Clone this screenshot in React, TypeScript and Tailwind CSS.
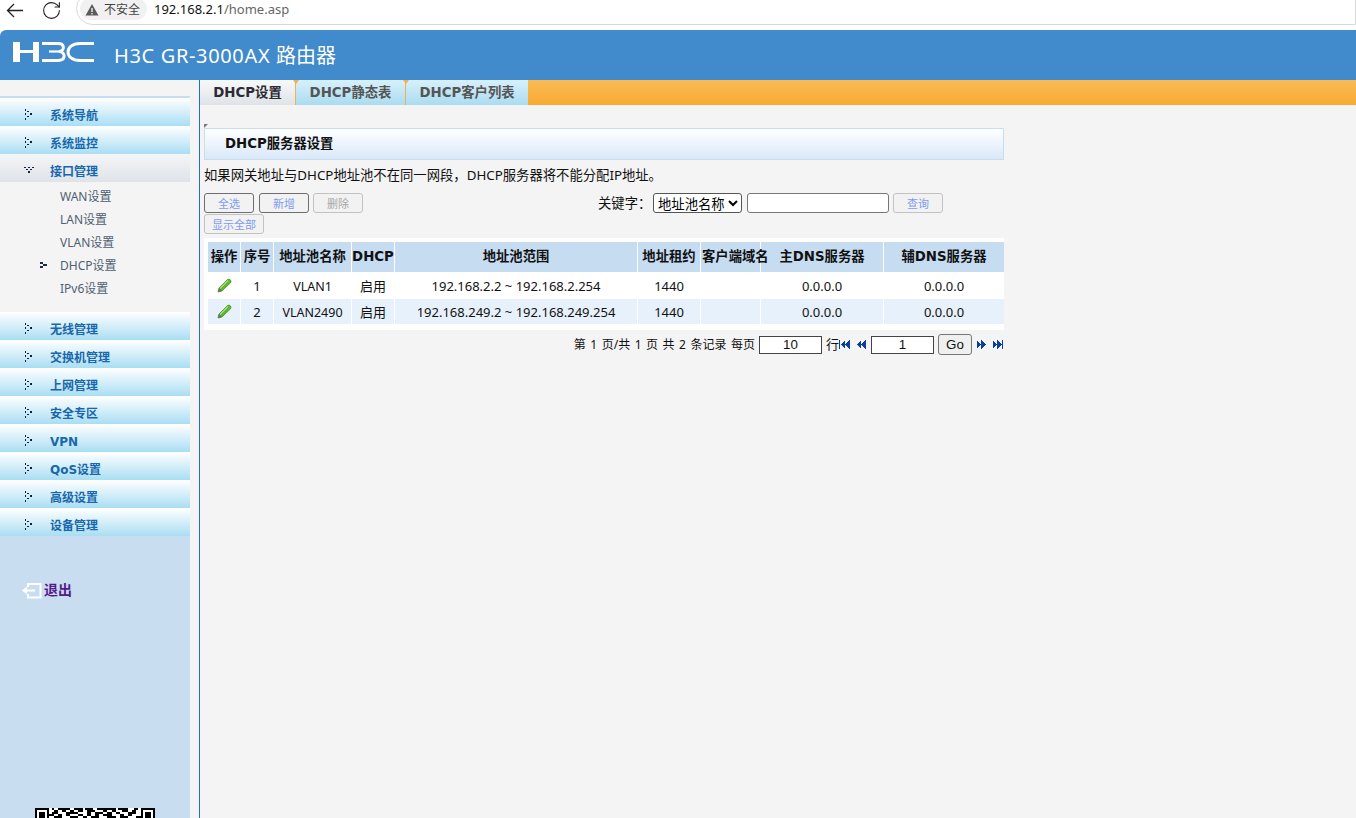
import React from "react";
import { RotateCw } from "lucide-react";

const F = "[font-family:'DejaVu_Sans','Noto_Sans_CJK_SC',sans-serif]";
const N = "[font-family:'Noto_Sans','Noto_Sans_CJK_SC',sans-serif]";

function Dotted({ open = false }: { open?: boolean }) {
  const c = "#0f2340";
  return open ? (
    <svg width="11" height="8" viewBox="0 0 11 8" shapeRendering="crispEdges">
      <rect x="0" y="1" width="2" height="1" fill={c} /><rect x="4" y="1" width="2" height="1" fill={c} /><rect x="8" y="1" width="2" height="1" fill={c} />
      <rect x="2" y="3" width="2" height="1" fill={c} /><rect x="6" y="3" width="2" height="1" fill={c} />
      <rect x="4" y="5" width="2" height="2" fill={c} />
    </svg>
  ) : (
    <svg width="9" height="11" viewBox="0 0 9 11" shapeRendering="crispEdges">
      <rect x="1" y="0" width="1" height="2" fill={c} /><rect x="1" y="4" width="1" height="2" fill={c} /><rect x="1" y="9" width="1" height="2" fill={c} />
      <rect x="3" y="2" width="2" height="1" fill={c} /><rect x="3" y="7" width="2" height="1" fill={c} />
      <rect x="6" y="4" width="2" height="2" fill={c} />
    </svg>
  );
}

function MenuItem({ label, open = false }: { label: string; open?: boolean }) {
  return (
    <div
      className={`flex h-[28px] items-center pt-[8px] text-[12px] font-bold text-[#1767ac] ${
        open ? "bg-gradient-to-b from-[#f4f5f6] to-[#dfe3e8]" : "bg-gradient-to-b from-white to-[#a9def3]"
      }`}
    >
      <span className="-mt-[4px] flex w-[50px] justify-start pl-[24px]">
        <Dotted open={open} />
      </span>
      <span>{label}</span>
    </div>
  );
}

function SubItem({ label, active = false }: { label: string; active?: boolean }) {
  return (
    <div className={`relative flex h-[23px] items-center pl-[60px] text-[12px] text-[#4f5f73] ${N}`}>
      {active && (
        <svg className="absolute left-[40px] top-[8px]" width="7" height="6" viewBox="0 0 7 6" shapeRendering="crispEdges">
          <rect x="0" y="0" width="3" height="2" fill="#1d2c44" />
          <rect x="0" y="4" width="3" height="2" fill="#1d2c44" />
          <rect x="3" y="2" width="4" height="2" fill="#1d2c44" />
        </svg>
      )}
      {label}
    </div>
  );
}

const qrLeft = ["1111111", "1000001", "1011101", "1011101", "1011101"];
const qrMid = [
  "01001111110011110111100111111111011111000110",
  "00110011001100110011110000110011000111001100",
  "01110000111111000011001111001100110000111100",
  "11001100110000110011001100111100001100110000",
  "00111100001111001100111100001111001111000011",
];
const qrRows = qrLeft.map((l, i) => l + qrMid[i] + l);

function Qr() {
  return (
    <svg width="120" height="10" viewBox="0 0 116 10" shapeRendering="crispEdges" preserveAspectRatio="none">
      <rect width="116" height="10" fill="white" />
      {qrRows.map((r, y) =>
        r.split("").map((v, x) => (v === "1" ? <rect key={`${x}-${y}`} x={x * 2} y={y * 2} width="2" height="2" fill="black" /> : null))
      )}
    </svg>
  );
}

function H3CLogo() {
  return (
    <svg width="82" height="22" viewBox="0 0 82 22">
      <g fill="white">
        <rect x="0" y="1" width="7" height="20" />
        <rect x="20" y="1" width="6" height="20" />
        <rect x="6" y="9" width="15" height="3" />
      </g>
      <path d="M29 2.5 H45 C52 2.5 52 10 46 10.5 C53 11 53 19.5 45 19.5 H29" fill="none" stroke="white" strokeWidth="3" />
      <path d="M36 10.5 H46" fill="none" stroke="white" strokeWidth="2.2" />
      <path d="M81 2.5 H67 C51 2.5 51 19.5 67 19.5 H81" fill="none" stroke="white" strokeWidth="3" />
    </svg>
  );
}

function Pencil() {
  return (
    <svg width="15" height="15" viewBox="0 0 15 15">
      <path d="M1 14 L2 10 L10.5 1.5 Q12 .5 13.5 2 Q14.5 3.5 13.5 4.8 L5 13 Z" fill="#5cb531" stroke="#3c8a20" strokeWidth=".7" />
      <path d="M3 10.5 L11 2.5" stroke="#a6e07a" strokeWidth="1.2" />
      <path d="M1 14 L2 10 L5 13 Z" fill="#6b7560" />
    </svg>
  );
}

function PageIcon({ kind }: { kind: "first" | "prev" | "next" | "last" }) {
  const c = "#0b3f9e";
  const left = kind === "first" || kind === "prev";
  const bar = kind === "first" || kind === "last";
  return (
    <svg width="11" height="9" viewBox="0 0 11 9" shapeRendering="crispEdges">
      <g transform={left ? undefined : "translate(11,0) scale(-1,1)"} fill={c}>
        {bar && <rect x="0" y="0" width="1" height="9" />}
        <path d="M1.5 4.5 L6 0 V9 Z" />
        <path d="M6 4.5 L10.5 0 V9 Z" />
      </g>
    </svg>
  );
}

function Btn({ label, w, h = "h-[20px]", disabled = false, muted = false }: { label: string; w: string; h?: string; disabled?: boolean; muted?: boolean }) {
  return (
    <button
      className={`${h} ${w} rounded-[3px] border bg-[#f2f2f2] pt-[2px] text-[11px] leading-none ${
        disabled ? "border-[#c2c2c2] text-[#a8a8a8]" : muted ? "border-[#c2c2c2] text-[#7f9bf0]" : "border-[#6e6e6e] text-[#7f9bf0]"
      }`}
    >
      {label}
    </button>
  );
}

const cols = "grid grid-cols-[32px_32px_77px_42px_242px_62px_59px_122px_120px] gap-x-px";

const rows = [
  { no: "1", name: "VLAN1", range: "192.168.2.2 ~ 192.168.2.254", h: "h-[27px] bg-white" },
  { no: "2", name: "VLAN2490", range: "192.168.249.2 ~ 192.168.249.254", h: "h-[25px] bg-[#e6f1fb]" },
];

const heads = ["操作", "序号", "地址池名称", "DHCP", "地址池范围", "地址租约", "客户端域名", "主DNS服务器", "辅DNS服务器"];

export default function App() {
  return (
    <div className={`flex h-[818px] w-[1356px] flex-col overflow-hidden bg-white ${F}`}>
      {/* browser bar */}
      <div className="flex h-[30px] shrink-0 items-start bg-white">
        <svg width="18" height="15" viewBox="0 0 18 15" className="ml-[6px] mt-[3px]" fill="none" stroke="#222" strokeWidth="1.3">
          <path d="M17 7.5 H2 M8 1 L1.5 7.5 L8 14" />
        </svg>
        <RotateCw className="ml-[17px] mt-[0px] text-[#222]" size={21} strokeWidth={1.25} />
        <div className="ml-[14px] -mt-[8px] flex h-[33px] w-[1280px] items-center rounded-l-[17px] border border-[#d8d8d8] pl-[3px] pt-[1px]">
          <div className="flex h-[22px] w-[67px] items-center rounded-full bg-[#f1f1f1] pl-[5px] text-[12px] text-[#444] [font-family:'Noto_Sans_CJK_SC',sans-serif]">
            <svg width="14" height="13" viewBox="0 0 14 13" className="mr-[5px]">
              <path d="M7 1 L13.5 12.5 H.5 Z" fill="#5b5b5b" />
              <rect x="6.3" y="5" width="1.4" height="4" fill="#f1f1f1" />
              <rect x="6.3" y="10" width="1.4" height="1.4" fill="#f1f1f1" />
            </svg>
            不安全
          </div>
          <span className="ml-[7px] mt-[2px] text-[13px] text-[#111] [font-family:'Noto_Sans',sans-serif]">
            192.168.2.1<span className="text-[#666]">/home.asp</span>
          </span>
        </div>
      </div>

      {/* header */}
      <div className="flex h-[50px] shrink-0 items-center rounded-tl-[6px] bg-[#418acb] pl-[13px] text-white">
        <div className="-mt-[7px]">
          <H3CLogo />
        </div>
        <span className={`ml-[19px] mt-[2px] text-[20px] ${N}`}>
          <span className="tracking-[0.65px]">H3C GR-3000AX </span>路由器
        </span>
      </div>

      <div className="flex min-h-0 flex-1 bg-[#f4f4f4]">
        {/* sidebar */}
        <div className="flex w-[190px] shrink-0 flex-col overflow-hidden bg-[#c8ddf0]">
          <div className="h-[16px] shrink-0 bg-[#f4f4f4]" />
          <div className="h-[2px] shrink-0 bg-[#c8ddf0]" />
          <div>
            <MenuItem label="系统导航" />
            <MenuItem label="系统监控" />
            <MenuItem label="接口管理" open />
          </div>
          <div className="h-[130px] shrink-0 bg-[#f4f4f4] pt-[3px]">
            <SubItem label="WAN设置" />
            <SubItem label="LAN设置" />
            <SubItem label="VLAN设置" />
            <SubItem label="DHCP设置" active />
            <SubItem label="IPv6设置" />
          </div>
          {["无线管理", "交换机管理", "上网管理", "安全专区", "VPN", "QoS设置", "高级设置", "设备管理"].map((l) => (
            <MenuItem key={l} label={l} />
          ))}
          <div className="ml-[22px] mt-[44px] flex items-center">
            <svg width="20" height="16" viewBox="0 0 20 16">
              <path d="M6 4 V1 H18.5 V14.5 H6 V11" fill="none" stroke="white" strokeWidth="2" />
              <path d="M0 7.5 L5 3.5 V6.5 H13 V8.5 H5 V11.5 Z" fill="white" />
            </svg>
            <span className="ml-[2px] text-[14px] font-bold text-[#551a8b]">退出</span>
          </div>
          <div className="ml-[35px] mt-[207px] shrink-0">
            <Qr />
          </div>
        </div>

        {/* main */}
        <div className="ml-[9px] flex min-w-0 flex-1 flex-col border-l border-[#2a6cc4]">
          <div className="flex h-[25px] shrink-0 bg-gradient-to-b from-[#f9bb55] to-[#f9a931] text-[13.33px] font-bold">
            <div className="relative flex w-[95px] items-center justify-center bg-gradient-to-b from-[#f8f8f8] to-[#dfe3e7] text-[#2b2b33]">
              DHCP设置
            </div>
            <div className="relative flex w-[110px] items-center justify-center border-l border-[#f4b04a] bg-gradient-to-b from-[#d8f0fb] to-[#aadcf0] text-[#555]">
              <span className="absolute -left-[3px] top-0 h-0 w-0 border-x-[3px] border-t-[4px] border-x-transparent border-t-[#f4b04a]" />
              DHCP静态表
            </div>
            <div className="relative flex w-[123px] items-center justify-center border-l border-[#f4b04a] bg-gradient-to-b from-[#d8f0fb] to-[#aadcf0] text-[#555]">
              <span className="absolute -left-[3px] top-0 h-0 w-0 border-x-[3px] border-t-[4px] border-x-transparent border-t-[#f4b04a]" />
              DHCP客户列表
            </div>
          </div>

          <div className="w-[804px] pl-[4px] pt-[19px]">
            <div className="h-0 w-0 border-r-[4px] border-t-[4px] border-r-transparent border-t-[#777]" />
            <div className="flex h-[32px] items-center border border-[#c8ddf0] bg-gradient-to-b from-white to-[#d9e8f9] pl-[20px] text-[13.33px] font-bold text-[#111]">
              DHCP服务器设置
            </div>
            <div className={`mt-[6px] h-[19px] whitespace-nowrap text-[13.33px] leading-[19px] text-[#111] ${N}`}>
              如果网关地址与DHCP地址池不在同一网段，DHCP服务器将不能分配IP地址。
            </div>
            <div className="mt-[8px] flex h-[20px] items-center">
              <Btn label="全选" w="w-[50px]" />
              <div className="w-[5px]" />
              <Btn label="新增" w="w-[50px]" />
              <div className="w-[4px]" />
              <Btn label="删除" w="w-[50px]" disabled />
              <span className={`ml-[235px] w-[55px] whitespace-nowrap pt-px text-[13.33px] text-[#111] ${N}`}>关键字：</span>
              <select className={`h-[20px] w-[89px] appearance-auto rounded-[3px] border border-[#555] bg-white text-[13.33px] text-black ${N}`}>
                <option>地址池名称</option>
              </select>
              <input className="ml-[5px] h-[20px] w-[142px] rounded-[3px] border border-[#777] bg-white" />
              <div className="w-[4px]" />
              <Btn label="查询" w="w-[50px]" muted />
            </div>
            <div className="mt-px flex">
              <Btn label="显示全部" w="w-[60px]" muted />
            </div>

            <div className="mt-[4px] bg-white px-[4px] pb-[6px] pt-[4px]">
              <div className={`${cols} h-[30px] text-[13.33px] font-bold text-[#111]`}>
                {heads.map((h, i) => (
                  <div key={h} className={`flex items-center whitespace-nowrap bg-[#c6dcf1] ${i === 6 ? "relative z-10 justify-start pl-px" : "justify-center"}`}>
                    {h}
                  </div>
                ))}
              </div>
              {rows.map((r) => (
                <div key={r.no} className={`${cols} ${r.h} bg-white text-[13px] text-[#111] ${N}`}>
                  <div className={`flex items-center justify-center ${r.h}`}><Pencil /></div>
                  <div className={`flex items-center justify-center pt-[2px] ${r.h}`}>{r.no}</div>
                  <div className={`flex items-center justify-center pt-[4px] text-[12.5px] ${r.h}`}>{r.name}</div>
                  <div className={`flex items-center justify-center pt-[2px] ${r.h}`}>启用</div>
                  <div className={`flex items-center justify-center pt-[2px] ${r.h}`}>{r.range}</div>
                  <div className={`flex items-center justify-center pt-[2px] ${r.h}`}>1440</div>
                  <div className={`${r.h}`} />
                  <div className={`flex items-center justify-center pt-[2px] ${r.h}`}>0.0.0.0</div>
                  <div className={`flex items-center justify-center pt-[2px] ${r.h}`}>0.0.0.0</div>
                </div>
              ))}
            </div>

            <div className={`mt-[4px] flex h-[21px] items-center justify-end pr-px text-[13px] text-[#111] ${N}`}>
              <span className="text-[12px] [word-spacing:1.4px]">第 1 页/共 1 页 共 2 条记录 每页</span>
              <div className="ml-[4px] flex h-[18px] w-[63px] items-center justify-center border border-[#444] bg-white text-[13.33px] [font-family:'Liberation_Sans',sans-serif]">10</div>
              <span className="ml-[4px]">行</span>
              <PageIcon kind="first" />
              <span className="ml-[5px] flex"><PageIcon kind="prev" /></span>
              <div className="ml-[5px] flex h-[18px] w-[63px] items-center justify-center border border-[#444] bg-white text-[13.33px] [font-family:'Liberation_Sans',sans-serif]">1</div>
              <button className="ml-[4px] h-[21px] w-[34px] rounded-[3px] border border-[#777] bg-[#efefef] text-[13.33px] text-[#111] [font-family:'Liberation_Sans',sans-serif]">Go</button>
              <span className="ml-[4px] flex"><PageIcon kind="next" /></span>
              <span className="ml-[5px] flex"><PageIcon kind="last" /></span>
            </div>
          </div>
        </div>
      </div>
    </div>
  );
}
